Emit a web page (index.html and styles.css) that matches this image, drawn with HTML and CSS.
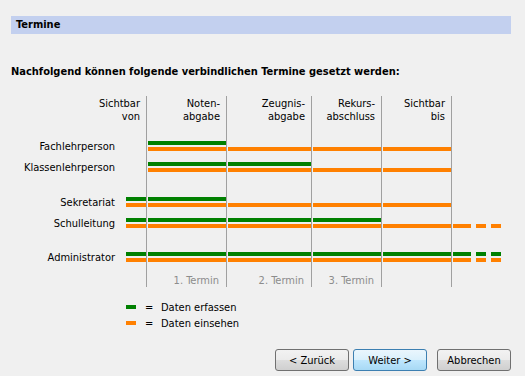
FILE: index.html
```html
<!DOCTYPE html>
<html lang="de">
<head>
    <meta charset="UTF-8">
    <meta name="viewport" content="width=device-width, initial-scale=1.0">
    <title>Termine</title>
    <link rel="stylesheet" href="styles.css">
</head>
<body>
    <div class="page">
        <div class="title">Termine</div>
        <p class="intro">Nachfolgend können folgende verbindlichen Termine gesetzt werden:</p>

        <div class="chart">
            <div class="row head">
                <div class="cell start">Sichtbar<br>von</div>
                <div class="cell col">Noten-<br>abgabe</div>
                <div class="cell col">Zeugnis-<br>abgabe</div>
                <div class="cell col">Rekurs-<br>abschluss</div>
                <div class="cell col">Sichtbar<br>bis</div>
                <div class="cell col"></div>
            </div>

            <div class="row role">
                <div class="label">Fachlehrperson</div>
                <div class="cell"></div>
                <div class="cell col e"><div class="bars"></div></div>
                <div class="cell col v"><div class="bars"></div></div>
                <div class="cell col v"><div class="bars"></div></div>
                <div class="cell col v"><div class="bars"></div></div>
                <div class="cell col"></div>
            </div>
            <div class="row role">
                <div class="label">Klassenlehrperson</div>
                <div class="cell"></div>
                <div class="cell col e"><div class="bars"></div></div>
                <div class="cell col e"><div class="bars"></div></div>
                <div class="cell col v"><div class="bars"></div></div>
                <div class="cell col v"><div class="bars"></div></div>
                <div class="cell col"></div>
            </div>

            <div class="row space-a">
                <div></div><div></div>
                <div class="col"></div><div class="col"></div><div class="col"></div><div class="col"></div><div class="col"></div>
            </div>

            <div class="row role">
                <div class="label">Sekretariat</div>
                <div class="cell e"><div class="bars"></div></div>
                <div class="cell col e"><div class="bars"></div></div>
                <div class="cell col v"><div class="bars"></div></div>
                <div class="cell col v"><div class="bars"></div></div>
                <div class="cell col v"><div class="bars"></div></div>
                <div class="cell col"></div>
            </div>
            <div class="row role">
                <div class="label">Schulleitung</div>
                <div class="cell e"><div class="bars"></div></div>
                <div class="cell col e"><div class="bars"></div></div>
                <div class="cell col e"><div class="bars"></div></div>
                <div class="cell col e"><div class="bars"></div></div>
                <div class="cell col v"><div class="bars"></div></div>
                <div class="cell col v"><div class="dash"><i></i><i></i><i></i></div></div>
            </div>

            <div class="row space-b">
                <div></div><div></div>
                <div class="col"></div><div class="col"></div><div class="col"></div><div class="col"></div><div class="col"></div>
            </div>

            <div class="row role">
                <div class="label">Administrator</div>
                <div class="cell e"><div class="bars"></div></div>
                <div class="cell col e"><div class="bars"></div></div>
                <div class="cell col e"><div class="bars"></div></div>
                <div class="cell col e"><div class="bars"></div></div>
                <div class="cell col e"><div class="bars"></div></div>
                <div class="cell col e"><div class="dash"><i></i><i></i><i></i></div></div>
            </div>

            <div class="row foot">
                <div></div><div></div>
                <div class="col">1. Termin</div>
                <div class="col">2. Termin</div>
                <div class="col">3. Termin</div>
                <div class="col"></div>
                <div class="col"></div>
            </div>
        </div>

        <div class="legend">
            <div class="legend-row">
                <span class="swatch green"></span>
                <span class="eq">=</span>
                <span>Daten erfassen</span>
            </div>
            <div class="legend-row">
                <span class="swatch orange"></span>
                <span class="eq">=</span>
                <span>Daten einsehen</span>
            </div>
        </div>

        <div class="actions">
            <button class="btn">&lt; Zurück</button>
            <button class="btn default">Weiter &gt;</button>
            <button class="btn cancel">Abbrechen</button>
        </div>
    </div>
</body>
</html>
```

FILE: styles.css
```css
body {
    margin: 0;
    background-color: #f0f0f0;
    color: #000;
    font-family: "DejaVu Sans Condensed", "DejaVu Sans", sans-serif;
    font-size: 11px;
}

.page {
    padding: 16px 14px 0 11px;
}

.title {
    height: 18px;
    line-height: 18px;
    padding-left: 5px;
    background-color: #c3d0ef;
    font-weight: bold;
}

.intro {
    margin: 31px 0 0;
    line-height: 13px;
    font-weight: bold;
}

/* chart */
.chart {
    margin-top: 18px;
}

.row {
    display: grid;
    grid-template-columns: 115px 20px 80px 85px 70px 70px 1fr;
}

.col {
    border-left: 1px solid #a0a0a0;
    padding-left: 1px;
}

.head {
    height: 40px;
    line-height: 13px;
}

.head .cell {
    padding-top: 1px;
    padding-right: 6px;
    text-align: right;
}

.head .start {
    grid-column: span 2;
}

.role {
    height: 21px;
}

.label {
    padding-right: 11px;
    line-height: 21px;
    text-align: right;
}

.bars,
.dash i {
    height: 10px;
}

.bars {
    margin-top: 5px;
}

.dash {
    display: flex;
    gap: 5px;
    margin-top: 5px;
}

.dash i:nth-child(1) {
    width: 18px;
}

.dash i {
    width: 10px;
}

.e .bars,
.e .dash i {
    background: linear-gradient(#008000 0 4px, transparent 4px 6px, #ff8000 6px 10px);
}

.v .bars,
.v .dash i {
    background: linear-gradient(transparent 0 6px, #ff8000 6px 10px);
}

.space-a {
    height: 14px;
}

.space-b {
    height: 13px;
}

.foot {
    height: 19px;
}

.foot .col {
    padding: 6px 7px 0 0;
    line-height: 13px;
    color: #8c8c8c;
    text-align: right;
}

/* legend */
.legend {
    margin: 12px 0 0 115px;
}

.legend-row {
    display: flex;
    align-items: center;
    height: 16px;
}

.swatch {
    width: 10px;
    height: 4px;
    margin-right: 9px;
}

.swatch.green {
    background-color: #008000;
}

.swatch.orange {
    background-color: #ff8000;
}

.eq {
    width: 16px;
}

/* buttons */
.actions {
    display: flex;
    justify-content: flex-end;
    gap: 4px;
    margin-top: 18px;
}

.btn {
    width: 74px;
    height: 22px;
    padding: 0;
    border: 1px solid #707070;
    border-radius: 3px;
    background: linear-gradient(#f2f2f2 0%, #ebebeb 50%, #dddddd 51%, #cfcfcf 100%);
    color: #000;
    font: inherit;
}

.btn.default {
    border-color: #3c7fb1;
    background: linear-gradient(#eaf6fd 0%, #d9f0fc 50%, #bee6fd 51%, #a7d9f5 100%);
}

.btn.cancel {
    margin-left: 6px;
}
```
